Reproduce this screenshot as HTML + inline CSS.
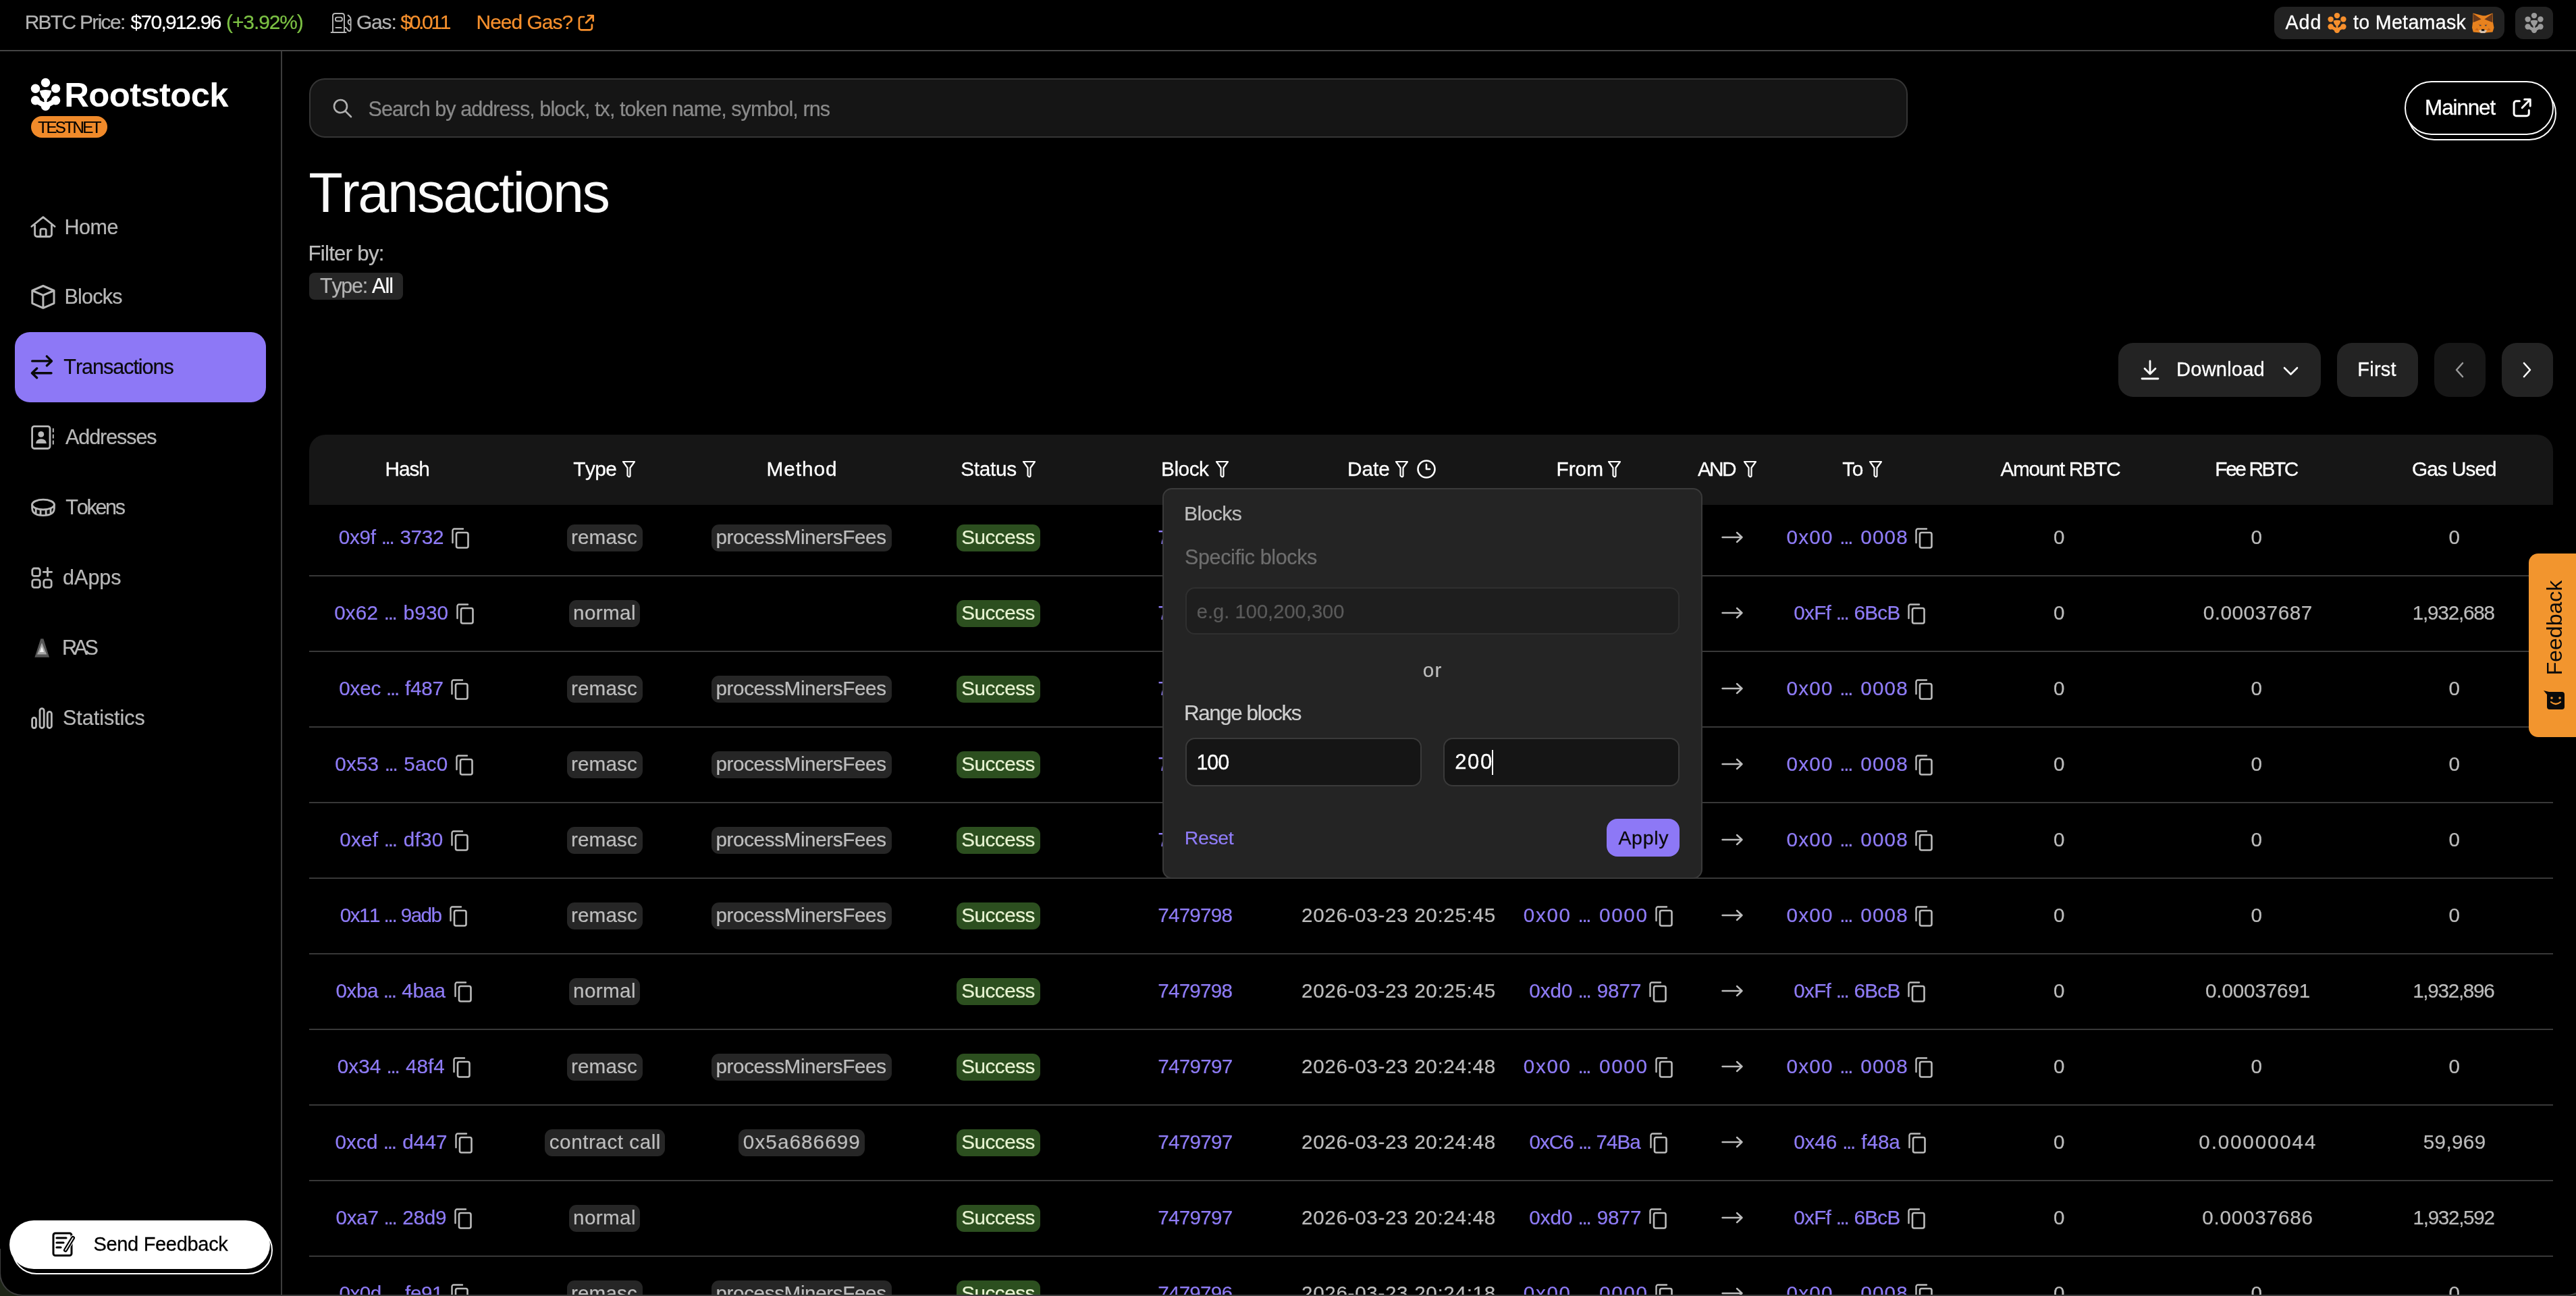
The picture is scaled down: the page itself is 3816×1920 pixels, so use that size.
<!DOCTYPE html>
<html><head><meta charset="utf-8"><title>Transactions</title>
<style>
html,body{margin:0;padding:0;background:#000;width:3816px;height:1920px;overflow:hidden}
body{position:relative;font-family:"Liberation Sans", sans-serif;font-kerning:none;-webkit-font-smoothing:antialiased}
svg{overflow:visible}
</style></head><body>
<div style="position:absolute;left:0;top:0;width:3816px;height:1920px;will-change:transform">
<div style="position:absolute;left:0px;top:74px;width:3816px;height:2px;background:#444;border-radius:0px;"></div>
<div style="position:absolute;left:36.64px;top:18.22px;font-size:29.94px;line-height:1;font-weight:400;color:#b3b3b3;letter-spacing:-1.676px;white-space:nowrap;-webkit-text-stroke:0.22px #b3b3b3;">RBTC Price:</div>
<div style="position:absolute;left:193.48px;top:18.22px;font-size:29.94px;line-height:1;font-weight:400;color:#fff;letter-spacing:-1.668px;white-space:nowrap;-webkit-text-stroke:0.22px #fff;">$70,912.96</div>
<div style="position:absolute;left:335.04px;top:18.22px;font-size:29.94px;line-height:1;font-weight:400;color:#7cc144;letter-spacing:-1.072px;white-space:nowrap;-webkit-text-stroke:0.22px #7cc144;">(+3.92%)</div>
<svg style="position:absolute;left:484px;top:14px" width="44" height="40" viewBox="484 14 44 40" fill="none"><path d="M493 48 V23.6 Q493 20 496.6 20 H506.4 Q510 20 510 23.6 V48 M490.6 48 H512.6 M497.5 41 H505.6 M510 40.6 Q513.2 40.6 514.2 43 Q515.6 46 517.6 46 Q519.6 46 519.6 43 V28.6 Q519.6 25.2 515.6 22.6 M519.6 29.2 Q515.6 29.2 515.6 32.6 Q515.6 35.8 519.6 37.2" stroke="#b8b8b8" stroke-width="1.9" stroke-linecap="round" stroke-linejoin="round"/><rect x="496.9" y="25.6" width="10.1" height="5.7" rx="2.6" stroke="#b8b8b8" stroke-width="1.9"/></svg>
<div style="position:absolute;left:527.99px;top:18.22px;font-size:29.94px;line-height:1;font-weight:400;color:#b3b3b3;letter-spacing:-1.163px;white-space:nowrap;-webkit-text-stroke:0.22px #b3b3b3;">Gas:</div>
<div style="position:absolute;left:593.28px;top:18.22px;font-size:29.94px;line-height:1;font-weight:400;color:#f7902d;letter-spacing:-3.278px;white-space:nowrap;-webkit-text-stroke:0.22px #f7902d;">$0.011</div>
<div style="position:absolute;left:705.54px;top:18.22px;font-size:29.94px;line-height:1;font-weight:400;color:#f7902d;letter-spacing:-0.986px;white-space:nowrap;-webkit-text-stroke:0.22px #f7902d;">Need Gas?</div>
<svg style="position:absolute;left:850px;top:15px" width="40" height="40" viewBox="850 15 40 40" fill="none"><path d="M865.1 25 H861 a3.1 3.1 0 0 0-3.1 3.1 V41.2 a3.1 3.1 0 0 0 3.1 3.1 H873.8 a3.1 3.1 0 0 0 3.1-3.1 V36.6 M871 23 H878.7 V31 M878.5 23.2 L868.1 33.8" stroke="#f7902d" stroke-width="2.7" stroke-linecap="round" stroke-linejoin="round"/></svg>
<div style="position:absolute;left:3369px;top:10px;width:341px;height:48px;background:#222;border-radius:14px;"></div>
<div style="position:absolute;left:3385.54px;top:19.01px;font-size:28.63px;line-height:1;font-weight:400;color:#fff;letter-spacing:0.930px;white-space:nowrap;-webkit-text-stroke:0.29px #fff;">Add</div>
<svg style="position:absolute;left:3448px;top:19px;" width="28" height="30" viewBox="6 6 43 48" fill="none"><g fill="#f7902d"><circle cx="27.5" cy="12.5" r="6.7"/><circle cx="12.5" cy="21.3" r="6.7"/><circle cx="42.6" cy="21.1" r="6.7"/><circle cx="12.5" cy="38.7" r="6.7"/><circle cx="42.6" cy="38.7" r="6.7"/><circle cx="27.5" cy="47.2" r="6.7"/><path d="M18.6 24.6 Q27.5 21.6 36.4 24.6 L34.8 30 Q33.2 34.6 30.2 36.6 L29.2 41 H25.8 L24.8 36.6 Q21.8 34.6 20.2 30 Z"/><path d="M12.5 38.7 L27.5 47.2 L42.6 38.7" stroke="#f7902d" stroke-width="7.6" stroke-linejoin="round" fill="none"/></g></svg>
<div style="position:absolute;left:3485.97px;top:19.01px;font-size:28.63px;line-height:1;font-weight:400;color:#fff;letter-spacing:0.311px;white-space:nowrap;-webkit-text-stroke:0.29px #fff;">to Metamask</div>
<svg style="position:absolute;left:3655px;top:14px" width="45" height="40" viewBox="3655 14 45 40"><path d="M3663.5 19.5 L3678 23.3 H3682 L3692.5 19.5 L3693 33 L3694.5 41 L3692.5 47.5 L3684 48.3 L3678 49 L3672 48.3 L3663.8 47.5 L3662 41 L3663 33 Z" fill="#e8821e"/><path d="M3663.8 20.3 L3675.6 28.5 L3663.6 33.2 Z M3692.2 20.3 L3680.4 28.5 L3692.4 33.2 Z" fill="#6a3a1b"/><path d="M3669.5 41.5 L3672 45 L3666 44.5 Z M3686.5 41.5 L3684 45 L3690 44.5 Z M3670.5 35.5 L3676 36.5 L3674 38 Z M3685.5 35.5 L3680 36.5 L3682 38 Z" fill="#c9661c"/><path d="M3671.8 45.2 L3676 44.2 H3680 L3684.3 45.2 L3681 48.9 H3675 Z" fill="#d6c4b2"/><rect x="3676" y="43.2" width="4.3" height="2.6" fill="#111"/><rect x="3673" y="37" width="2.6" height="1.4" fill="#3c4650"/><rect x="3681" y="37" width="2.6" height="1.4" fill="#3c4650"/></svg>
<div style="position:absolute;left:3726px;top:10px;width:56px;height:48px;background:#222;border-radius:12px;"></div>
<svg style="position:absolute;left:3740px;top:19px;" width="28" height="30" viewBox="6 6 43 48" fill="none"><g fill="#9a9a9a"><circle cx="27.5" cy="12.5" r="6.7"/><circle cx="12.5" cy="21.3" r="6.7"/><circle cx="42.6" cy="21.1" r="6.7"/><circle cx="12.5" cy="38.7" r="6.7"/><circle cx="42.6" cy="38.7" r="6.7"/><circle cx="27.5" cy="47.2" r="6.7"/><path d="M18.6 24.6 Q27.5 21.6 36.4 24.6 L34.8 30 Q33.2 34.6 30.2 36.6 L29.2 41 H25.8 L24.8 36.6 Q21.8 34.6 20.2 30 Z"/><path d="M12.5 38.7 L27.5 47.2 L42.6 38.7" stroke="#9a9a9a" stroke-width="7.6" stroke-linejoin="round" fill="none"/></g></svg>
<div style="position:absolute;left:416px;top:76px;width:2px;height:1844px;background:#3d3d3d;border-radius:0px;"></div>
<svg style="position:absolute;left:46px;top:116px;" width="43" height="48" viewBox="6 6 43 48" fill="none"><g fill="#fff"><circle cx="27.5" cy="12.5" r="6.7"/><circle cx="12.5" cy="21.3" r="6.7"/><circle cx="42.6" cy="21.1" r="6.7"/><circle cx="12.5" cy="38.7" r="6.7"/><circle cx="42.6" cy="38.7" r="6.7"/><circle cx="27.5" cy="47.2" r="6.7"/><path d="M18.6 24.6 Q27.5 21.6 36.4 24.6 L34.8 30 Q33.2 34.6 30.2 36.6 L29.2 41 H25.8 L24.8 36.6 Q21.8 34.6 20.2 30 Z"/><path d="M12.5 38.7 L27.5 47.2 L42.6 38.7" stroke="#fff" stroke-width="7.6" stroke-linejoin="round" fill="none"/></g></svg>
<div style="position:absolute;left:95.30px;top:115.90px;font-size:50.87px;line-height:1;font-weight:700;color:#fff;letter-spacing:-0.670px;white-space:nowrap;">Rootstock</div>
<div style="position:absolute;left:46px;top:172px;width:113px;height:32px;background:#f08a2a;border-radius:16px;"></div>
<div style="position:absolute;left:56.26px;top:176.63px;font-size:24.13px;line-height:1;font-weight:400;color:#000;letter-spacing:-2.605px;white-space:nowrap;-webkit-text-stroke:0.18px #000;">TESTNET</div>
<div style="position:absolute;left:22px;top:492px;width:372px;height:104px;background:#8d78f6;border-radius:22px;"></div>
<div style="position:absolute;left:95.50px;top:320.74px;font-size:30.52px;line-height:1;font-weight:400;color:#b8b8b8;letter-spacing:-0.517px;white-space:nowrap;-webkit-text-stroke:0.23px #b8b8b8;">Home</div>
<div style="position:absolute;left:95.50px;top:424.34px;font-size:30.52px;line-height:1;font-weight:400;color:#b8b8b8;letter-spacing:-0.777px;white-space:nowrap;-webkit-text-stroke:0.23px #b8b8b8;">Blocks</div>
<div style="position:absolute;left:94.31px;top:527.74px;font-size:30.52px;line-height:1;font-weight:400;color:#0a0a0a;letter-spacing:-1.021px;white-space:nowrap;-webkit-text-stroke:0.23px #0a0a0a;">Transactions</div>
<div style="position:absolute;left:96.94px;top:631.74px;font-size:30.52px;line-height:1;font-weight:400;color:#b8b8b8;letter-spacing:-1.067px;white-space:nowrap;-webkit-text-stroke:0.23px #b8b8b8;">Addresses</div>
<div style="position:absolute;left:97.31px;top:736.24px;font-size:30.52px;line-height:1;font-weight:400;color:#b8b8b8;letter-spacing:-2.259px;white-space:nowrap;-webkit-text-stroke:0.23px #b8b8b8;">Tokens</div>
<div style="position:absolute;left:93.12px;top:839.74px;font-size:30.52px;line-height:1;font-weight:400;color:#b8b8b8;letter-spacing:-0.013px;white-space:nowrap;-webkit-text-stroke:0.23px #b8b8b8;">dApps</div>
<div style="position:absolute;left:91.90px;top:943.74px;font-size:30.52px;line-height:1;font-weight:400;color:#b8b8b8;letter-spacing:-4.425px;white-space:nowrap;-webkit-text-stroke:0.23px #b8b8b8;">RAS</div>
<div style="position:absolute;left:93.01px;top:1047.74px;font-size:30.52px;line-height:1;font-weight:400;color:#b8b8b8;letter-spacing:-0.036px;white-space:nowrap;-webkit-text-stroke:0.23px #b8b8b8;">Statistics</div>
<svg style="position:absolute;left:40px;top:310px" width="50" height="50" viewBox="40 310 50 50" fill="none"><path d="M46.8 335.5 L63.9 321.6 L81.1 335.5 M51.6 333 V347.3 a3.2 3.2 0 0 0 3.2 3.2 H73.3 a3.2 3.2 0 0 0 3.2-3.2 V333 M59.9 350.5 V341.4 a2.2 2.2 0 0 1 2.2-2.2 H66 a2.2 2.2 0 0 1 2.2 2.2 V350.5" stroke="#b8b8b8" stroke-width="2.8" stroke-linecap="round" stroke-linejoin="round"/></svg>
<svg style="position:absolute;left:40px;top:415px" width="50" height="50" viewBox="40 415 50 50" fill="none"><path d="M63.9 423.5 L80 430.5 V449.3 L63.9 456.3 L47.8 449.3 V430.5 Z M47.8 430.5 L63.9 437.3 L80 430.5 M63.9 437.3 V456.3" stroke="#b8b8b8" stroke-width="3" stroke-linecap="round" stroke-linejoin="round"/></svg>
<svg style="position:absolute;left:40px;top:520px" width="50" height="50" viewBox="40 520 50 50" fill="none"><path d="M47.7 534.9 H76 M69.3 527.9 L76.5 534.9 L69.3 541.7 M76 552.8 H47.5 M54.7 545.8 L47.4 552.8 L54.7 559.7" stroke="#0a0a0a" stroke-width="3.4" stroke-linecap="round" stroke-linejoin="round"/></svg>
<svg style="position:absolute;left:40px;top:622px" width="50" height="50" viewBox="40 622 50 50" fill="none"><rect x="47.6" y="631.6" width="26.4" height="32.9" rx="3.2" stroke="#b8b8b8" stroke-width="2.8" stroke-linecap="round" stroke-linejoin="round"/><circle cx="60.8" cy="643.4" r="4.4" fill="#b8b8b8"/><path d="M53.1 657 Q53.6 650.3 60.9 650.3 Q68.3 650.3 68.9 657 Z" fill="#b8b8b8"/><path d="M78.8 634.5 V640.5 M78.8 643.5 V649.5 M78.8 652.5 V658.5" stroke="#b8b8b8" stroke-width="2" stroke-linecap="butt"/></svg>
<svg style="position:absolute;left:40px;top:727px" width="50" height="50" viewBox="40 727 50 50" fill="none"><ellipse cx="64" cy="747.6" rx="16.4" ry="7.4" stroke="#b8b8b8" stroke-width="2.8" stroke-linecap="round" stroke-linejoin="round"/><path d="M47.6 747.6 V753 Q47.6 763.6 64 763.6 Q80.4 763.6 80.4 753 V747.6 M53.2 754 V760.5 M60.1 755.3 V762.5 M68.1 755.3 V762.5 M75 754 V760.5" stroke="#b8b8b8" stroke-width="2.8" stroke-linecap="round" stroke-linejoin="round"/></svg>
<svg style="position:absolute;left:40px;top:831px" width="50" height="50" viewBox="40 831 50 50" fill="none"><rect x="47.8" y="842" width="11.4" height="11.4" rx="3" stroke="#b8b8b8" stroke-width="2.8" stroke-linecap="round" stroke-linejoin="round"/><rect x="47.8" y="858.9" width="11.4" height="11.4" rx="3" stroke="#b8b8b8" stroke-width="2.8" stroke-linecap="round" stroke-linejoin="round"/><rect x="64.8" y="858.9" width="11.4" height="11.4" rx="3" stroke="#b8b8b8" stroke-width="2.8" stroke-linecap="round" stroke-linejoin="round"/><path d="M70.5 841.5 V853.4 M64.3 847.4 H76.6" stroke="#b8b8b8" stroke-width="2.8" stroke-linecap="round" stroke-linejoin="round"/></svg>
<svg style="position:absolute;left:40px;top:935px" width="50" height="50" viewBox="40 935 50 50" fill="none"><path d="M60.3 946.2 H64.3 L73 973.8 H51.4 Z" fill="#555"/><path d="M62 952.2 L69.1 969.5 H55 Z" fill="#a8a8a8"/><path d="M62 958.1 L65.1 965.9 H58.9 Z" fill="#f0f0f0"/></svg>
<svg style="position:absolute;left:40px;top:1038px" width="50" height="50" viewBox="40 1038 50 50" fill="none"><rect x="47.6" y="1063.1" width="5.9" height="15.4" rx="2.95" stroke="#b8b8b8" stroke-width="2.8" stroke-linecap="round" stroke-linejoin="round"/><rect x="59" y="1049.6" width="6.2" height="28.9" rx="3.1" stroke="#b8b8b8" stroke-width="2.8" stroke-linecap="round" stroke-linejoin="round"/><rect x="70.3" y="1054.3" width="6.1" height="24.2" rx="3.05" stroke="#b8b8b8" stroke-width="2.8" stroke-linecap="round" stroke-linejoin="round"/></svg>
<div style="position:absolute;left:18px;top:1816px;width:386px;height:72px;background:#000;border-radius:36px;border:2px solid #fff;box-sizing:border-box;"></div>
<div style="position:absolute;left:14px;top:1808px;width:386px;height:72px;background:#fff;border-radius:36px;"></div>
<svg style="position:absolute;left:77px;top:1825px;" width="34" height="37" viewBox="0 0 34 37" fill="none"><rect x="2" y="2" width="27" height="33" rx="3" stroke="#000" stroke-width="3"/><path d="M7 9 H21 M7 16 H17 M7 23 H13" stroke="#000" stroke-width="3.2" stroke-linecap="round"/><path d="M31 9 L20 27" stroke="#fff" stroke-width="8" stroke-linecap="round"/><path d="M31 9 L20 27" stroke="#000" stroke-width="6" stroke-linecap="round"/><path d="M31 9 L20 27" stroke="#fff" stroke-width="1.6" stroke-linecap="round"/></svg>
<div style="position:absolute;left:138.38px;top:1828.94px;font-size:29.07px;line-height:1;font-weight:400;color:#000;letter-spacing:-0.338px;white-space:nowrap;-webkit-text-stroke:0.29px #000;">Send Feedback</div>
<div style="position:absolute;left:458px;top:116px;width:2368px;height:88px;background:#151515;border-radius:23px;border:2px solid #353535;box-sizing:border-box;"></div>
<svg style="position:absolute;left:492px;top:145px;" width="30" height="30" viewBox="0 0 30 30" fill="none"><circle cx="12.5" cy="12.5" r="9.5" stroke="#b0b0b0" stroke-width="2.6"/><path d="M19.5 19.5 L28 28" stroke="#b0b0b0" stroke-width="2.6" stroke-linecap="round"/></svg>
<div style="position:absolute;left:545.61px;top:145.74px;font-size:30.52px;line-height:1;font-weight:400;color:#8a8a8a;letter-spacing:-0.929px;white-space:nowrap;-webkit-text-stroke:0.23px #8a8a8a;">Search by address, block, tx, token name, symbol, rns</div>
<div style="position:absolute;left:3566px;top:128px;width:221px;height:80px;background:#000;border-radius:40px;border:2px solid #fff;box-sizing:border-box;"></div>
<div style="position:absolute;left:3562px;top:120px;width:221px;height:80px;background:#000;border-radius:40px;border:2px solid #fff;box-sizing:border-box;"></div>
<div style="position:absolute;left:3592.12px;top:143.61px;font-size:31.4px;line-height:1;font-weight:400;color:#fff;letter-spacing:-1.101px;white-space:nowrap;-webkit-text-stroke:0.32px #fff;">Mainnet</div>
<svg style="position:absolute;left:3710px;top:135px" width="50" height="50" viewBox="3710 135 50 50" fill="none"><path d="M3732.4 149.7 H3727.6 a3.5 3.5 0 0 0-3.5 3.5 V168.3 a3.5 3.5 0 0 0 3.5 3.5 H3742.8 a3.5 3.5 0 0 0 3.5-3.5 V163.2 M3739.7 147.3 H3748.2 V157 M3748 147.5 L3736.2 159.7" stroke="#fff" stroke-width="3" stroke-linecap="round" stroke-linejoin="round"/></svg>
<div style="position:absolute;left:457.14px;top:245.43px;font-size:82.85px;line-height:1;font-weight:400;color:#fafafa;letter-spacing:-2.494px;white-space:nowrap;">Transactions</div>
<div style="position:absolute;left:456.44px;top:360.14px;font-size:31.25px;line-height:1;font-weight:400;color:#bdbdbd;letter-spacing:-0.744px;white-space:nowrap;-webkit-text-stroke:0.23px #bdbdbd;">Filter by:</div>
<div style="position:absolute;left:458px;top:404px;width:139px;height:40px;background:#262626;border-radius:8px;"></div>
<div style="position:absolute;left:474.01px;top:408.24px;font-size:30.52px;line-height:1;font-weight:400;color:#b3b3b3;letter-spacing:-1.264px;white-space:nowrap;-webkit-text-stroke:0.23px #b3b3b3;">Type:</div>
<div style="position:absolute;left:550.94px;top:408.24px;font-size:30.52px;line-height:1;font-weight:400;color:#fff;letter-spacing:-0.908px;white-space:nowrap;-webkit-text-stroke:0.23px #fff;">All</div>
<div style="position:absolute;left:3138px;top:508px;width:300px;height:80px;background:#232323;border-radius:22px;"></div>
<svg style="position:absolute;left:3171px;top:533px;" width="28" height="30" viewBox="0 0 28 30" fill="none"><path d="M14 2 V21 M6 13 L14 21 L22 13 M2 28 H26" stroke="#fff" stroke-width="2.8" stroke-linecap="round" stroke-linejoin="round"/></svg>
<div style="position:absolute;left:3224.12px;top:532.94px;font-size:29.07px;line-height:1;font-weight:400;color:#fff;letter-spacing:0.197px;white-space:nowrap;-webkit-text-stroke:0.29px #fff;">Download</div>
<svg style="position:absolute;left:3382px;top:543px;" width="23" height="14" viewBox="0 0 23 14" fill="none"><path d="M2 2 L11.5 11.5 L21 2" stroke="#fff" stroke-width="2.6" stroke-linecap="round" stroke-linejoin="round"/></svg>
<div style="position:absolute;left:3462px;top:508px;width:120px;height:80px;background:#232323;border-radius:22px;"></div>
<div style="position:absolute;left:3492.32px;top:532.94px;font-size:29.07px;line-height:1;font-weight:400;color:#fff;letter-spacing:0.197px;white-space:nowrap;-webkit-text-stroke:0.29px #fff;">First</div>
<div style="position:absolute;left:3606px;top:508px;width:76px;height:80px;background:#171717;border-radius:22px;"></div>
<svg style="position:absolute;left:3636px;top:536px;" width="15" height="24" viewBox="0 0 15 24" fill="none"><path d="M12 2 L3 12 L12 22" stroke="#9a9a9a" stroke-width="2.6" stroke-linecap="round" stroke-linejoin="round"/></svg>
<div style="position:absolute;left:3706px;top:508px;width:76px;height:80px;background:#232323;border-radius:22px;"></div>
<svg style="position:absolute;left:3736px;top:536px;" width="15" height="24" viewBox="0 0 15 24" fill="none"><path d="M3 2 L12 12 L3 22" stroke="#fff" stroke-width="2.6" stroke-linecap="round" stroke-linejoin="round"/></svg>
<div style="position:absolute;left:458px;top:644px;width:3324px;height:104px;background:#161616;border-radius:24px 24px 0 0;"></div>
<div style="position:absolute;left:570.56px;top:679.84px;font-size:29.8px;line-height:1;font-weight:400;color:#fff;letter-spacing:-1.063px;white-space:nowrap;-webkit-text-stroke:0.30px #fff;">Hash</div>
<div style="position:absolute;left:849.33px;top:679.84px;font-size:29.8px;line-height:1;font-weight:400;color:#fff;letter-spacing:-0.552px;white-space:nowrap;-webkit-text-stroke:0.30px #fff;">Type</div>
<svg style="position:absolute;left:920.5px;top:682px;" width="21.0" height="26" viewBox="0 0 21 26" fill="none"><path d="M2 2 H19 L12.5 11 V23 a1.6 1.6 0 0 1-2.6 1 L8.5 22.5 V11 Z" stroke="#fff" stroke-width="2.2" stroke-linejoin="round"/></svg>
<div style="position:absolute;left:1135.56px;top:679.84px;font-size:29.8px;line-height:1;font-weight:400;color:#fff;letter-spacing:0.914px;white-space:nowrap;-webkit-text-stroke:0.30px #fff;">Method</div>
<div style="position:absolute;left:1423.15px;top:679.84px;font-size:29.8px;line-height:1;font-weight:400;color:#fff;letter-spacing:-0.310px;white-space:nowrap;-webkit-text-stroke:0.30px #fff;">Status</div>
<svg style="position:absolute;left:1513.5px;top:682px;" width="21.0" height="26" viewBox="0 0 21 26" fill="none"><path d="M2 2 H19 L12.5 11 V23 a1.6 1.6 0 0 1-2.6 1 L8.5 22.5 V11 Z" stroke="#fff" stroke-width="2.2" stroke-linejoin="round"/></svg>
<div style="position:absolute;left:1720.06px;top:679.84px;font-size:29.8px;line-height:1;font-weight:400;color:#fff;letter-spacing:-0.492px;white-space:nowrap;-webkit-text-stroke:0.30px #fff;">Block</div>
<svg style="position:absolute;left:1799.5px;top:682px;" width="21.0" height="26" viewBox="0 0 21 26" fill="none"><path d="M2 2 H19 L12.5 11 V23 a1.6 1.6 0 0 1-2.6 1 L8.5 22.5 V11 Z" stroke="#fff" stroke-width="2.2" stroke-linejoin="round"/></svg>
<div style="position:absolute;left:1996.06px;top:679.84px;font-size:29.8px;line-height:1;font-weight:400;color:#fff;letter-spacing:-0.059px;white-space:nowrap;-webkit-text-stroke:0.30px #fff;">Date</div>
<svg style="position:absolute;left:2066px;top:682px;" width="21" height="26" viewBox="0 0 21 26" fill="none"><path d="M2 2 H19 L12.5 11 V23 a1.6 1.6 0 0 1-2.6 1 L8.5 22.5 V11 Z" stroke="#fff" stroke-width="2.2" stroke-linejoin="round"/></svg>
<svg style="position:absolute;left:2098px;top:680px;" width="30" height="30" viewBox="0 0 30 30" fill="none"><circle cx="15" cy="15" r="12.5" stroke="#fff" stroke-width="2.6"/><path d="M15 8 V15 H20" stroke="#fff" stroke-width="2.6" stroke-linecap="round" stroke-linejoin="round"/></svg>
<div style="position:absolute;left:2305.56px;top:679.84px;font-size:29.8px;line-height:1;font-weight:400;color:#fff;letter-spacing:-0.038px;white-space:nowrap;-webkit-text-stroke:0.30px #fff;">From</div>
<svg style="position:absolute;left:2381px;top:682px;" width="21" height="26" viewBox="0 0 21 26" fill="none"><path d="M2 2 H19 L12.5 11 V23 a1.6 1.6 0 0 1-2.6 1 L8.5 22.5 V11 Z" stroke="#fff" stroke-width="2.2" stroke-linejoin="round"/></svg>
<div style="position:absolute;left:2514.94px;top:679.84px;font-size:29.8px;line-height:1;font-weight:400;color:#fff;letter-spacing:-2.717px;white-space:nowrap;-webkit-text-stroke:0.30px #fff;">AND</div>
<svg style="position:absolute;left:2582px;top:682px;" width="21" height="26" viewBox="0 0 21 26" fill="none"><path d="M2 2 H19 L12.5 11 V23 a1.6 1.6 0 0 1-2.6 1 L8.5 22.5 V11 Z" stroke="#fff" stroke-width="2.2" stroke-linejoin="round"/></svg>
<div style="position:absolute;left:2729.33px;top:679.84px;font-size:29.8px;line-height:1;font-weight:400;color:#fff;letter-spacing:-3.856px;white-space:nowrap;-webkit-text-stroke:0.30px #fff;">To</div>
<svg style="position:absolute;left:2767.5px;top:682px;" width="21.0" height="26" viewBox="0 0 21 26" fill="none"><path d="M2 2 H19 L12.5 11 V23 a1.6 1.6 0 0 1-2.6 1 L8.5 22.5 V11 Z" stroke="#fff" stroke-width="2.2" stroke-linejoin="round"/></svg>
<div style="position:absolute;left:2963.54px;top:679.84px;font-size:29.8px;line-height:1;font-weight:400;color:#fff;letter-spacing:-1.391px;white-space:nowrap;-webkit-text-stroke:0.30px #fff;">Amount RBTC</div>
<div style="position:absolute;left:3281.36px;top:679.84px;font-size:29.8px;line-height:1;font-weight:400;color:#fff;letter-spacing:-2.396px;white-space:nowrap;-webkit-text-stroke:0.30px #fff;">Fee RBTC</div>
<div style="position:absolute;left:3573.00px;top:679.84px;font-size:29.8px;line-height:1;font-weight:400;color:#fff;letter-spacing:-0.983px;white-space:nowrap;-webkit-text-stroke:0.30px #fff;">Gas Used</div>
<div style="position:absolute;left:458px;top:852px;width:3324px;height:2px;background:#383838;border-radius:0px;"></div>
<div style="position:absolute;left:501.84px;top:780.76px;font-size:29.65px;line-height:1;font-weight:400;color:#8f7cf7;letter-spacing:-0.293px;white-space:nowrap;-webkit-text-stroke:0.22px #8f7cf7;">0x9f <span style="letter-spacing:-2.30px">..</span>. 3732</div>
<svg style="position:absolute;left:668.5px;top:781.5px;" width="26.0" height="31.0" viewBox="0 0 26 31" fill="none"><path d="M1.5 22 V4 a2.5 2.5 0 0 1 2.5-2.5 H17" stroke="#bcbcbc" stroke-width="2.4" stroke-linecap="round"/><rect x="7" y="7" width="17.5" height="22.5" rx="2.5" stroke="#bcbcbc" stroke-width="2.6"/></svg>
<div style="position:absolute;left:840px;top:776.5px;width:111.70000000000005px;height:40.0px;background:#262626;border-radius:11px;"></div>
<div style="position:absolute;left:846.03px;top:780.76px;font-size:29.65px;line-height:1;font-weight:400;color:#bdbdbd;letter-spacing:0.110px;white-space:nowrap;-webkit-text-stroke:0.22px #bdbdbd;">remasc</div>
<div style="position:absolute;left:1054px;top:776.5px;width:266.70000000000005px;height:40.0px;background:#262626;border-radius:11px;"></div>
<div style="position:absolute;left:1060.49px;top:780.76px;font-size:29.65px;line-height:1;font-weight:400;color:#bdbdbd;letter-spacing:-0.382px;white-space:nowrap;-webkit-text-stroke:0.22px #bdbdbd;">processMinersFees</div>
<div style="position:absolute;left:1417px;top:776.5px;width:124px;height:40.0px;background:#2c4f1f;border-radius:11px;"></div>
<div style="position:absolute;left:1424.15px;top:780.76px;font-size:29.65px;line-height:1;font-weight:400;color:#e8f4d2;letter-spacing:-0.473px;white-space:nowrap;-webkit-text-stroke:0.22px #e8f4d2;">Success</div>
<div style="position:absolute;left:1715.28px;top:780.76px;font-size:29.65px;line-height:1;font-weight:400;color:#8f7cf7;letter-spacing:-0.767px;white-space:nowrap;-webkit-text-stroke:0.22px #8f7cf7;">7479799</div>
<div style="position:absolute;left:1928.01px;top:780.76px;font-size:29.65px;line-height:1;font-weight:400;color:#bcbcbc;letter-spacing:0.664px;white-space:nowrap;-webkit-text-stroke:0.22px #bcbcbc;">2026-03-23 20:26:18</div>
<div style="position:absolute;left:2256.84px;top:780.76px;font-size:29.65px;line-height:1;font-weight:400;color:#8f7cf7;letter-spacing:1.628px;white-space:nowrap;-webkit-text-stroke:0.22px #8f7cf7;">0x00 <span style="letter-spacing:-2.30px">..</span>. 0000</div>
<svg style="position:absolute;left:2451.5px;top:781.5px;" width="26.0" height="31.0" viewBox="0 0 26 31" fill="none"><path d="M1.5 22 V4 a2.5 2.5 0 0 1 2.5-2.5 H17" stroke="#bcbcbc" stroke-width="2.4" stroke-linecap="round"/><rect x="7" y="7" width="17.5" height="22.5" rx="2.5" stroke="#bcbcbc" stroke-width="2.6"/></svg>
<svg style="position:absolute;left:2550px;top:787px;" width="33" height="18" viewBox="0 0 33 18" fill="none"><path d="M1.5 9 H30.5 M23 2 L30.5 9 L23 16" stroke="#bcbcbc" stroke-width="2.4" stroke-linecap="round" stroke-linejoin="round"/></svg>
<div style="position:absolute;left:2646.44px;top:780.76px;font-size:29.65px;line-height:1;font-weight:400;color:#8f7cf7;letter-spacing:1.261px;white-space:nowrap;-webkit-text-stroke:0.22px #8f7cf7;">0x00 <span style="letter-spacing:-2.30px">..</span>. 0008</div>
<svg style="position:absolute;left:2837.1px;top:781.5px;" width="26.0" height="31.0" viewBox="0 0 26 31" fill="none"><path d="M1.5 22 V4 a2.5 2.5 0 0 1 2.5-2.5 H17" stroke="#bcbcbc" stroke-width="2.4" stroke-linecap="round"/><rect x="7" y="7" width="17.5" height="22.5" rx="2.5" stroke="#bcbcbc" stroke-width="2.6"/></svg>
<div style="position:absolute;left:3042.04px;top:780.76px;font-size:29.65px;line-height:1;font-weight:400;color:#bcbcbc;letter-spacing:0.000px;white-space:nowrap;-webkit-text-stroke:0.22px #bcbcbc;">0</div>
<div style="position:absolute;left:3334.44px;top:780.76px;font-size:29.65px;line-height:1;font-weight:400;color:#bcbcbc;letter-spacing:0.000px;white-space:nowrap;-webkit-text-stroke:0.22px #bcbcbc;">0</div>
<div style="position:absolute;left:3627.44px;top:780.76px;font-size:29.65px;line-height:1;font-weight:400;color:#bcbcbc;letter-spacing:0.000px;white-space:nowrap;-webkit-text-stroke:0.22px #bcbcbc;">0</div>
<div style="position:absolute;left:458px;top:964px;width:3324px;height:2px;background:#383838;border-radius:0px;"></div>
<div style="position:absolute;left:495.14px;top:892.76px;font-size:29.65px;line-height:1;font-weight:400;color:#8f7cf7;letter-spacing:0.218px;white-space:nowrap;-webkit-text-stroke:0.22px #8f7cf7;">0x62 <span style="letter-spacing:-2.30px">..</span>. b930</div>
<svg style="position:absolute;left:675.5px;top:893.5px;" width="26.0" height="31.0" viewBox="0 0 26 31" fill="none"><path d="M1.5 22 V4 a2.5 2.5 0 0 1 2.5-2.5 H17" stroke="#bcbcbc" stroke-width="2.4" stroke-linecap="round"/><rect x="7" y="7" width="17.5" height="22.5" rx="2.5" stroke="#bcbcbc" stroke-width="2.6"/></svg>
<div style="position:absolute;left:843px;top:888.5px;width:104.79999999999995px;height:40.0px;background:#262626;border-radius:11px;"></div>
<div style="position:absolute;left:849.03px;top:892.76px;font-size:29.65px;line-height:1;font-weight:400;color:#bdbdbd;letter-spacing:0.385px;white-space:nowrap;-webkit-text-stroke:0.22px #bdbdbd;">normal</div>
<div style="position:absolute;left:1417px;top:888.5px;width:124px;height:40.0px;background:#2c4f1f;border-radius:11px;"></div>
<div style="position:absolute;left:1424.15px;top:892.76px;font-size:29.65px;line-height:1;font-weight:400;color:#e8f4d2;letter-spacing:-0.473px;white-space:nowrap;-webkit-text-stroke:0.22px #e8f4d2;">Success</div>
<div style="position:absolute;left:1715.28px;top:892.76px;font-size:29.65px;line-height:1;font-weight:400;color:#8f7cf7;letter-spacing:-0.767px;white-space:nowrap;-webkit-text-stroke:0.22px #8f7cf7;">7479799</div>
<div style="position:absolute;left:1928.01px;top:892.76px;font-size:29.65px;line-height:1;font-weight:400;color:#bcbcbc;letter-spacing:0.664px;white-space:nowrap;-webkit-text-stroke:0.22px #bcbcbc;">2026-03-23 20:26:18</div>
<div style="position:absolute;left:2265.34px;top:892.76px;font-size:29.65px;line-height:1;font-weight:400;color:#8f7cf7;letter-spacing:-0.069px;white-space:nowrap;-webkit-text-stroke:0.22px #8f7cf7;">0xd0 <span style="letter-spacing:-2.30px">..</span>. 9877</div>
<svg style="position:absolute;left:2442.7px;top:893.5px;" width="26.0" height="31.0" viewBox="0 0 26 31" fill="none"><path d="M1.5 22 V4 a2.5 2.5 0 0 1 2.5-2.5 H17" stroke="#bcbcbc" stroke-width="2.4" stroke-linecap="round"/><rect x="7" y="7" width="17.5" height="22.5" rx="2.5" stroke="#bcbcbc" stroke-width="2.6"/></svg>
<svg style="position:absolute;left:2550px;top:899px;" width="33" height="18" viewBox="0 0 33 18" fill="none"><path d="M1.5 9 H30.5 M23 2 L30.5 9 L23 16" stroke="#bcbcbc" stroke-width="2.4" stroke-linecap="round" stroke-linejoin="round"/></svg>
<div style="position:absolute;left:2657.34px;top:892.76px;font-size:29.65px;line-height:1;font-weight:400;color:#8f7cf7;letter-spacing:-0.719px;white-space:nowrap;-webkit-text-stroke:0.22px #8f7cf7;">0xFf <span style="letter-spacing:-2.30px">..</span>. 6BcB</div>
<svg style="position:absolute;left:2826.2px;top:893.5px;" width="26.0" height="31.0" viewBox="0 0 26 31" fill="none"><path d="M1.5 22 V4 a2.5 2.5 0 0 1 2.5-2.5 H17" stroke="#bcbcbc" stroke-width="2.4" stroke-linecap="round"/><rect x="7" y="7" width="17.5" height="22.5" rx="2.5" stroke="#bcbcbc" stroke-width="2.6"/></svg>
<div style="position:absolute;left:3042.04px;top:892.76px;font-size:29.65px;line-height:1;font-weight:400;color:#bcbcbc;letter-spacing:0.000px;white-space:nowrap;-webkit-text-stroke:0.22px #bcbcbc;">0</div>
<div style="position:absolute;left:3263.84px;top:892.76px;font-size:29.65px;line-height:1;font-weight:400;color:#bcbcbc;letter-spacing:0.522px;white-space:nowrap;-webkit-text-stroke:0.22px #bcbcbc;">0.00037687</div>
<div style="position:absolute;left:3573.74px;top:892.76px;font-size:29.65px;line-height:1;font-weight:400;color:#bcbcbc;letter-spacing:-1.195px;white-space:nowrap;-webkit-text-stroke:0.22px #bcbcbc;">1,932,688</div>
<div style="position:absolute;left:458px;top:1076px;width:3324px;height:2px;background:#383838;border-radius:0px;"></div>
<div style="position:absolute;left:502.34px;top:1004.76px;font-size:29.65px;line-height:1;font-weight:400;color:#8f7cf7;letter-spacing:-0.217px;white-space:nowrap;-webkit-text-stroke:0.22px #8f7cf7;">0xec <span style="letter-spacing:-2.30px">..</span>. f487</div>
<svg style="position:absolute;left:668.1px;top:1005.5px;" width="26.0" height="31.0" viewBox="0 0 26 31" fill="none"><path d="M1.5 22 V4 a2.5 2.5 0 0 1 2.5-2.5 H17" stroke="#bcbcbc" stroke-width="2.4" stroke-linecap="round"/><rect x="7" y="7" width="17.5" height="22.5" rx="2.5" stroke="#bcbcbc" stroke-width="2.6"/></svg>
<div style="position:absolute;left:840px;top:1000.5px;width:111.70000000000005px;height:40.0px;background:#262626;border-radius:11px;"></div>
<div style="position:absolute;left:846.03px;top:1004.76px;font-size:29.65px;line-height:1;font-weight:400;color:#bdbdbd;letter-spacing:0.110px;white-space:nowrap;-webkit-text-stroke:0.22px #bdbdbd;">remasc</div>
<div style="position:absolute;left:1054px;top:1000.5px;width:266.70000000000005px;height:40.0px;background:#262626;border-radius:11px;"></div>
<div style="position:absolute;left:1060.49px;top:1004.76px;font-size:29.65px;line-height:1;font-weight:400;color:#bdbdbd;letter-spacing:-0.382px;white-space:nowrap;-webkit-text-stroke:0.22px #bdbdbd;">processMinersFees</div>
<div style="position:absolute;left:1417px;top:1000.5px;width:124px;height:40.0px;background:#2c4f1f;border-radius:11px;"></div>
<div style="position:absolute;left:1424.15px;top:1004.76px;font-size:29.65px;line-height:1;font-weight:400;color:#e8f4d2;letter-spacing:-0.473px;white-space:nowrap;-webkit-text-stroke:0.22px #e8f4d2;">Success</div>
<div style="position:absolute;left:1715.28px;top:1004.76px;font-size:29.65px;line-height:1;font-weight:400;color:#8f7cf7;letter-spacing:-0.767px;white-space:nowrap;-webkit-text-stroke:0.22px #8f7cf7;">7479799</div>
<div style="position:absolute;left:1928.01px;top:1004.76px;font-size:29.65px;line-height:1;font-weight:400;color:#bcbcbc;letter-spacing:0.664px;white-space:nowrap;-webkit-text-stroke:0.22px #bcbcbc;">2026-03-23 20:26:18</div>
<div style="position:absolute;left:2256.84px;top:1004.76px;font-size:29.65px;line-height:1;font-weight:400;color:#8f7cf7;letter-spacing:1.628px;white-space:nowrap;-webkit-text-stroke:0.22px #8f7cf7;">0x00 <span style="letter-spacing:-2.30px">..</span>. 0000</div>
<svg style="position:absolute;left:2451.5px;top:1005.5px;" width="26.0" height="31.0" viewBox="0 0 26 31" fill="none"><path d="M1.5 22 V4 a2.5 2.5 0 0 1 2.5-2.5 H17" stroke="#bcbcbc" stroke-width="2.4" stroke-linecap="round"/><rect x="7" y="7" width="17.5" height="22.5" rx="2.5" stroke="#bcbcbc" stroke-width="2.6"/></svg>
<svg style="position:absolute;left:2550px;top:1011px;" width="33" height="18" viewBox="0 0 33 18" fill="none"><path d="M1.5 9 H30.5 M23 2 L30.5 9 L23 16" stroke="#bcbcbc" stroke-width="2.4" stroke-linecap="round" stroke-linejoin="round"/></svg>
<div style="position:absolute;left:2646.44px;top:1004.76px;font-size:29.65px;line-height:1;font-weight:400;color:#8f7cf7;letter-spacing:1.261px;white-space:nowrap;-webkit-text-stroke:0.22px #8f7cf7;">0x00 <span style="letter-spacing:-2.30px">..</span>. 0008</div>
<svg style="position:absolute;left:2837.1px;top:1005.5px;" width="26.0" height="31.0" viewBox="0 0 26 31" fill="none"><path d="M1.5 22 V4 a2.5 2.5 0 0 1 2.5-2.5 H17" stroke="#bcbcbc" stroke-width="2.4" stroke-linecap="round"/><rect x="7" y="7" width="17.5" height="22.5" rx="2.5" stroke="#bcbcbc" stroke-width="2.6"/></svg>
<div style="position:absolute;left:3042.04px;top:1004.76px;font-size:29.65px;line-height:1;font-weight:400;color:#bcbcbc;letter-spacing:0.000px;white-space:nowrap;-webkit-text-stroke:0.22px #bcbcbc;">0</div>
<div style="position:absolute;left:3334.44px;top:1004.76px;font-size:29.65px;line-height:1;font-weight:400;color:#bcbcbc;letter-spacing:0.000px;white-space:nowrap;-webkit-text-stroke:0.22px #bcbcbc;">0</div>
<div style="position:absolute;left:3627.44px;top:1004.76px;font-size:29.65px;line-height:1;font-weight:400;color:#bcbcbc;letter-spacing:0.000px;white-space:nowrap;-webkit-text-stroke:0.22px #bcbcbc;">0</div>
<div style="position:absolute;left:458px;top:1188px;width:3324px;height:2px;background:#383838;border-radius:0px;"></div>
<div style="position:absolute;left:496.34px;top:1116.76px;font-size:29.65px;line-height:1;font-weight:400;color:#8f7cf7;letter-spacing:0.165px;white-space:nowrap;-webkit-text-stroke:0.22px #8f7cf7;">0x53 <span style="letter-spacing:-2.30px">..</span>. 5ac0</div>
<svg style="position:absolute;left:674.5px;top:1117.5px;" width="26.0" height="31.0" viewBox="0 0 26 31" fill="none"><path d="M1.5 22 V4 a2.5 2.5 0 0 1 2.5-2.5 H17" stroke="#bcbcbc" stroke-width="2.4" stroke-linecap="round"/><rect x="7" y="7" width="17.5" height="22.5" rx="2.5" stroke="#bcbcbc" stroke-width="2.6"/></svg>
<div style="position:absolute;left:840px;top:1112.5px;width:111.70000000000005px;height:40.0px;background:#262626;border-radius:11px;"></div>
<div style="position:absolute;left:846.03px;top:1116.76px;font-size:29.65px;line-height:1;font-weight:400;color:#bdbdbd;letter-spacing:0.110px;white-space:nowrap;-webkit-text-stroke:0.22px #bdbdbd;">remasc</div>
<div style="position:absolute;left:1054px;top:1112.5px;width:266.70000000000005px;height:40.0px;background:#262626;border-radius:11px;"></div>
<div style="position:absolute;left:1060.49px;top:1116.76px;font-size:29.65px;line-height:1;font-weight:400;color:#bdbdbd;letter-spacing:-0.382px;white-space:nowrap;-webkit-text-stroke:0.22px #bdbdbd;">processMinersFees</div>
<div style="position:absolute;left:1417px;top:1112.5px;width:124px;height:40.0px;background:#2c4f1f;border-radius:11px;"></div>
<div style="position:absolute;left:1424.15px;top:1116.76px;font-size:29.65px;line-height:1;font-weight:400;color:#e8f4d2;letter-spacing:-0.473px;white-space:nowrap;-webkit-text-stroke:0.22px #e8f4d2;">Success</div>
<div style="position:absolute;left:1715.28px;top:1116.76px;font-size:29.65px;line-height:1;font-weight:400;color:#8f7cf7;letter-spacing:-0.767px;white-space:nowrap;-webkit-text-stroke:0.22px #8f7cf7;">7479799</div>
<div style="position:absolute;left:1928.01px;top:1116.76px;font-size:29.65px;line-height:1;font-weight:400;color:#bcbcbc;letter-spacing:0.664px;white-space:nowrap;-webkit-text-stroke:0.22px #bcbcbc;">2026-03-23 20:26:18</div>
<div style="position:absolute;left:2256.84px;top:1116.76px;font-size:29.65px;line-height:1;font-weight:400;color:#8f7cf7;letter-spacing:1.628px;white-space:nowrap;-webkit-text-stroke:0.22px #8f7cf7;">0x00 <span style="letter-spacing:-2.30px">..</span>. 0000</div>
<svg style="position:absolute;left:2451.5px;top:1117.5px;" width="26.0" height="31.0" viewBox="0 0 26 31" fill="none"><path d="M1.5 22 V4 a2.5 2.5 0 0 1 2.5-2.5 H17" stroke="#bcbcbc" stroke-width="2.4" stroke-linecap="round"/><rect x="7" y="7" width="17.5" height="22.5" rx="2.5" stroke="#bcbcbc" stroke-width="2.6"/></svg>
<svg style="position:absolute;left:2550px;top:1123px;" width="33" height="18" viewBox="0 0 33 18" fill="none"><path d="M1.5 9 H30.5 M23 2 L30.5 9 L23 16" stroke="#bcbcbc" stroke-width="2.4" stroke-linecap="round" stroke-linejoin="round"/></svg>
<div style="position:absolute;left:2646.44px;top:1116.76px;font-size:29.65px;line-height:1;font-weight:400;color:#8f7cf7;letter-spacing:1.261px;white-space:nowrap;-webkit-text-stroke:0.22px #8f7cf7;">0x00 <span style="letter-spacing:-2.30px">..</span>. 0008</div>
<svg style="position:absolute;left:2837.1px;top:1117.5px;" width="26.0" height="31.0" viewBox="0 0 26 31" fill="none"><path d="M1.5 22 V4 a2.5 2.5 0 0 1 2.5-2.5 H17" stroke="#bcbcbc" stroke-width="2.4" stroke-linecap="round"/><rect x="7" y="7" width="17.5" height="22.5" rx="2.5" stroke="#bcbcbc" stroke-width="2.6"/></svg>
<div style="position:absolute;left:3042.04px;top:1116.76px;font-size:29.65px;line-height:1;font-weight:400;color:#bcbcbc;letter-spacing:0.000px;white-space:nowrap;-webkit-text-stroke:0.22px #bcbcbc;">0</div>
<div style="position:absolute;left:3334.44px;top:1116.76px;font-size:29.65px;line-height:1;font-weight:400;color:#bcbcbc;letter-spacing:0.000px;white-space:nowrap;-webkit-text-stroke:0.22px #bcbcbc;">0</div>
<div style="position:absolute;left:3627.44px;top:1116.76px;font-size:29.65px;line-height:1;font-weight:400;color:#bcbcbc;letter-spacing:0.000px;white-space:nowrap;-webkit-text-stroke:0.22px #bcbcbc;">0</div>
<div style="position:absolute;left:458px;top:1300px;width:3324px;height:2px;background:#383838;border-radius:0px;"></div>
<div style="position:absolute;left:503.24px;top:1228.76px;font-size:29.65px;line-height:1;font-weight:400;color:#8f7cf7;letter-spacing:0.259px;white-space:nowrap;-webkit-text-stroke:0.22px #8f7cf7;">0xef <span style="letter-spacing:-2.30px">..</span>. df30</div>
<svg style="position:absolute;left:667.5px;top:1229.5px;" width="26.0" height="31.0" viewBox="0 0 26 31" fill="none"><path d="M1.5 22 V4 a2.5 2.5 0 0 1 2.5-2.5 H17" stroke="#bcbcbc" stroke-width="2.4" stroke-linecap="round"/><rect x="7" y="7" width="17.5" height="22.5" rx="2.5" stroke="#bcbcbc" stroke-width="2.6"/></svg>
<div style="position:absolute;left:840px;top:1224.5px;width:111.70000000000005px;height:40.0px;background:#262626;border-radius:11px;"></div>
<div style="position:absolute;left:846.03px;top:1228.76px;font-size:29.65px;line-height:1;font-weight:400;color:#bdbdbd;letter-spacing:0.110px;white-space:nowrap;-webkit-text-stroke:0.22px #bdbdbd;">remasc</div>
<div style="position:absolute;left:1054px;top:1224.5px;width:266.70000000000005px;height:40.0px;background:#262626;border-radius:11px;"></div>
<div style="position:absolute;left:1060.49px;top:1228.76px;font-size:29.65px;line-height:1;font-weight:400;color:#bdbdbd;letter-spacing:-0.382px;white-space:nowrap;-webkit-text-stroke:0.22px #bdbdbd;">processMinersFees</div>
<div style="position:absolute;left:1417px;top:1224.5px;width:124px;height:40.0px;background:#2c4f1f;border-radius:11px;"></div>
<div style="position:absolute;left:1424.15px;top:1228.76px;font-size:29.65px;line-height:1;font-weight:400;color:#e8f4d2;letter-spacing:-0.473px;white-space:nowrap;-webkit-text-stroke:0.22px #e8f4d2;">Success</div>
<div style="position:absolute;left:1715.28px;top:1228.76px;font-size:29.65px;line-height:1;font-weight:400;color:#8f7cf7;letter-spacing:-0.767px;white-space:nowrap;-webkit-text-stroke:0.22px #8f7cf7;">7479799</div>
<div style="position:absolute;left:1928.01px;top:1228.76px;font-size:29.65px;line-height:1;font-weight:400;color:#bcbcbc;letter-spacing:0.664px;white-space:nowrap;-webkit-text-stroke:0.22px #bcbcbc;">2026-03-23 20:26:18</div>
<div style="position:absolute;left:2256.84px;top:1228.76px;font-size:29.65px;line-height:1;font-weight:400;color:#8f7cf7;letter-spacing:1.628px;white-space:nowrap;-webkit-text-stroke:0.22px #8f7cf7;">0x00 <span style="letter-spacing:-2.30px">..</span>. 0000</div>
<svg style="position:absolute;left:2451.5px;top:1229.5px;" width="26.0" height="31.0" viewBox="0 0 26 31" fill="none"><path d="M1.5 22 V4 a2.5 2.5 0 0 1 2.5-2.5 H17" stroke="#bcbcbc" stroke-width="2.4" stroke-linecap="round"/><rect x="7" y="7" width="17.5" height="22.5" rx="2.5" stroke="#bcbcbc" stroke-width="2.6"/></svg>
<svg style="position:absolute;left:2550px;top:1235px;" width="33" height="18" viewBox="0 0 33 18" fill="none"><path d="M1.5 9 H30.5 M23 2 L30.5 9 L23 16" stroke="#bcbcbc" stroke-width="2.4" stroke-linecap="round" stroke-linejoin="round"/></svg>
<div style="position:absolute;left:2646.44px;top:1228.76px;font-size:29.65px;line-height:1;font-weight:400;color:#8f7cf7;letter-spacing:1.261px;white-space:nowrap;-webkit-text-stroke:0.22px #8f7cf7;">0x00 <span style="letter-spacing:-2.30px">..</span>. 0008</div>
<svg style="position:absolute;left:2837.1px;top:1229.5px;" width="26.0" height="31.0" viewBox="0 0 26 31" fill="none"><path d="M1.5 22 V4 a2.5 2.5 0 0 1 2.5-2.5 H17" stroke="#bcbcbc" stroke-width="2.4" stroke-linecap="round"/><rect x="7" y="7" width="17.5" height="22.5" rx="2.5" stroke="#bcbcbc" stroke-width="2.6"/></svg>
<div style="position:absolute;left:3042.04px;top:1228.76px;font-size:29.65px;line-height:1;font-weight:400;color:#bcbcbc;letter-spacing:0.000px;white-space:nowrap;-webkit-text-stroke:0.22px #bcbcbc;">0</div>
<div style="position:absolute;left:3334.44px;top:1228.76px;font-size:29.65px;line-height:1;font-weight:400;color:#bcbcbc;letter-spacing:0.000px;white-space:nowrap;-webkit-text-stroke:0.22px #bcbcbc;">0</div>
<div style="position:absolute;left:3627.44px;top:1228.76px;font-size:29.65px;line-height:1;font-weight:400;color:#bcbcbc;letter-spacing:0.000px;white-space:nowrap;-webkit-text-stroke:0.22px #bcbcbc;">0</div>
<div style="position:absolute;left:458px;top:1412px;width:3324px;height:2px;background:#383838;border-radius:0px;"></div>
<div style="position:absolute;left:503.84px;top:1340.76px;font-size:29.65px;line-height:1;font-weight:400;color:#8f7cf7;letter-spacing:-1.563px;white-space:nowrap;-webkit-text-stroke:0.22px #8f7cf7;">0x11 <span style="letter-spacing:-2.30px">..</span>. 9adb</div>
<svg style="position:absolute;left:666.3px;top:1341.5px;" width="26.0" height="31.0" viewBox="0 0 26 31" fill="none"><path d="M1.5 22 V4 a2.5 2.5 0 0 1 2.5-2.5 H17" stroke="#bcbcbc" stroke-width="2.4" stroke-linecap="round"/><rect x="7" y="7" width="17.5" height="22.5" rx="2.5" stroke="#bcbcbc" stroke-width="2.6"/></svg>
<div style="position:absolute;left:840px;top:1336.5px;width:111.70000000000005px;height:40.0px;background:#262626;border-radius:11px;"></div>
<div style="position:absolute;left:846.03px;top:1340.76px;font-size:29.65px;line-height:1;font-weight:400;color:#bdbdbd;letter-spacing:0.110px;white-space:nowrap;-webkit-text-stroke:0.22px #bdbdbd;">remasc</div>
<div style="position:absolute;left:1054px;top:1336.5px;width:266.70000000000005px;height:40.0px;background:#262626;border-radius:11px;"></div>
<div style="position:absolute;left:1060.49px;top:1340.76px;font-size:29.65px;line-height:1;font-weight:400;color:#bdbdbd;letter-spacing:-0.382px;white-space:nowrap;-webkit-text-stroke:0.22px #bdbdbd;">processMinersFees</div>
<div style="position:absolute;left:1417px;top:1336.5px;width:124px;height:40.0px;background:#2c4f1f;border-radius:11px;"></div>
<div style="position:absolute;left:1424.15px;top:1340.76px;font-size:29.65px;line-height:1;font-weight:400;color:#e8f4d2;letter-spacing:-0.473px;white-space:nowrap;-webkit-text-stroke:0.22px #e8f4d2;">Success</div>
<div style="position:absolute;left:1715.28px;top:1340.76px;font-size:29.65px;line-height:1;font-weight:400;color:#8f7cf7;letter-spacing:-0.787px;white-space:nowrap;-webkit-text-stroke:0.22px #8f7cf7;">7479798</div>
<div style="position:absolute;left:1928.01px;top:1340.76px;font-size:29.65px;line-height:1;font-weight:400;color:#bcbcbc;letter-spacing:0.662px;white-space:nowrap;-webkit-text-stroke:0.22px #bcbcbc;">2026-03-23 20:25:45</div>
<div style="position:absolute;left:2256.84px;top:1340.76px;font-size:29.65px;line-height:1;font-weight:400;color:#8f7cf7;letter-spacing:1.628px;white-space:nowrap;-webkit-text-stroke:0.22px #8f7cf7;">0x00 <span style="letter-spacing:-2.30px">..</span>. 0000</div>
<svg style="position:absolute;left:2451.5px;top:1341.5px;" width="26.0" height="31.0" viewBox="0 0 26 31" fill="none"><path d="M1.5 22 V4 a2.5 2.5 0 0 1 2.5-2.5 H17" stroke="#bcbcbc" stroke-width="2.4" stroke-linecap="round"/><rect x="7" y="7" width="17.5" height="22.5" rx="2.5" stroke="#bcbcbc" stroke-width="2.6"/></svg>
<svg style="position:absolute;left:2550px;top:1347px;" width="33" height="18" viewBox="0 0 33 18" fill="none"><path d="M1.5 9 H30.5 M23 2 L30.5 9 L23 16" stroke="#bcbcbc" stroke-width="2.4" stroke-linecap="round" stroke-linejoin="round"/></svg>
<div style="position:absolute;left:2646.44px;top:1340.76px;font-size:29.65px;line-height:1;font-weight:400;color:#8f7cf7;letter-spacing:1.261px;white-space:nowrap;-webkit-text-stroke:0.22px #8f7cf7;">0x00 <span style="letter-spacing:-2.30px">..</span>. 0008</div>
<svg style="position:absolute;left:2837.1px;top:1341.5px;" width="26.0" height="31.0" viewBox="0 0 26 31" fill="none"><path d="M1.5 22 V4 a2.5 2.5 0 0 1 2.5-2.5 H17" stroke="#bcbcbc" stroke-width="2.4" stroke-linecap="round"/><rect x="7" y="7" width="17.5" height="22.5" rx="2.5" stroke="#bcbcbc" stroke-width="2.6"/></svg>
<div style="position:absolute;left:3042.04px;top:1340.76px;font-size:29.65px;line-height:1;font-weight:400;color:#bcbcbc;letter-spacing:0.000px;white-space:nowrap;-webkit-text-stroke:0.22px #bcbcbc;">0</div>
<div style="position:absolute;left:3334.44px;top:1340.76px;font-size:29.65px;line-height:1;font-weight:400;color:#bcbcbc;letter-spacing:0.000px;white-space:nowrap;-webkit-text-stroke:0.22px #bcbcbc;">0</div>
<div style="position:absolute;left:3627.44px;top:1340.76px;font-size:29.65px;line-height:1;font-weight:400;color:#bcbcbc;letter-spacing:0.000px;white-space:nowrap;-webkit-text-stroke:0.22px #bcbcbc;">0</div>
<div style="position:absolute;left:458px;top:1524px;width:3324px;height:2px;background:#383838;border-radius:0px;"></div>
<div style="position:absolute;left:497.54px;top:1452.76px;font-size:29.65px;line-height:1;font-weight:400;color:#8f7cf7;letter-spacing:-0.438px;white-space:nowrap;-webkit-text-stroke:0.22px #8f7cf7;">0xba <span style="letter-spacing:-2.30px">..</span>. 4baa</div>
<svg style="position:absolute;left:672.5px;top:1453.5px;" width="26.0" height="31.0" viewBox="0 0 26 31" fill="none"><path d="M1.5 22 V4 a2.5 2.5 0 0 1 2.5-2.5 H17" stroke="#bcbcbc" stroke-width="2.4" stroke-linecap="round"/><rect x="7" y="7" width="17.5" height="22.5" rx="2.5" stroke="#bcbcbc" stroke-width="2.6"/></svg>
<div style="position:absolute;left:843px;top:1448.5px;width:104.79999999999995px;height:40.0px;background:#262626;border-radius:11px;"></div>
<div style="position:absolute;left:849.03px;top:1452.76px;font-size:29.65px;line-height:1;font-weight:400;color:#bdbdbd;letter-spacing:0.385px;white-space:nowrap;-webkit-text-stroke:0.22px #bdbdbd;">normal</div>
<div style="position:absolute;left:1417px;top:1448.5px;width:124px;height:40.0px;background:#2c4f1f;border-radius:11px;"></div>
<div style="position:absolute;left:1424.15px;top:1452.76px;font-size:29.65px;line-height:1;font-weight:400;color:#e8f4d2;letter-spacing:-0.473px;white-space:nowrap;-webkit-text-stroke:0.22px #e8f4d2;">Success</div>
<div style="position:absolute;left:1715.28px;top:1452.76px;font-size:29.65px;line-height:1;font-weight:400;color:#8f7cf7;letter-spacing:-0.787px;white-space:nowrap;-webkit-text-stroke:0.22px #8f7cf7;">7479798</div>
<div style="position:absolute;left:1928.01px;top:1452.76px;font-size:29.65px;line-height:1;font-weight:400;color:#bcbcbc;letter-spacing:0.662px;white-space:nowrap;-webkit-text-stroke:0.22px #bcbcbc;">2026-03-23 20:25:45</div>
<div style="position:absolute;left:2265.34px;top:1452.76px;font-size:29.65px;line-height:1;font-weight:400;color:#8f7cf7;letter-spacing:-0.069px;white-space:nowrap;-webkit-text-stroke:0.22px #8f7cf7;">0xd0 <span style="letter-spacing:-2.30px">..</span>. 9877</div>
<svg style="position:absolute;left:2442.7px;top:1453.5px;" width="26.0" height="31.0" viewBox="0 0 26 31" fill="none"><path d="M1.5 22 V4 a2.5 2.5 0 0 1 2.5-2.5 H17" stroke="#bcbcbc" stroke-width="2.4" stroke-linecap="round"/><rect x="7" y="7" width="17.5" height="22.5" rx="2.5" stroke="#bcbcbc" stroke-width="2.6"/></svg>
<svg style="position:absolute;left:2550px;top:1459px;" width="33" height="18" viewBox="0 0 33 18" fill="none"><path d="M1.5 9 H30.5 M23 2 L30.5 9 L23 16" stroke="#bcbcbc" stroke-width="2.4" stroke-linecap="round" stroke-linejoin="round"/></svg>
<div style="position:absolute;left:2657.34px;top:1452.76px;font-size:29.65px;line-height:1;font-weight:400;color:#8f7cf7;letter-spacing:-0.719px;white-space:nowrap;-webkit-text-stroke:0.22px #8f7cf7;">0xFf <span style="letter-spacing:-2.30px">..</span>. 6BcB</div>
<svg style="position:absolute;left:2826.2px;top:1453.5px;" width="26.0" height="31.0" viewBox="0 0 26 31" fill="none"><path d="M1.5 22 V4 a2.5 2.5 0 0 1 2.5-2.5 H17" stroke="#bcbcbc" stroke-width="2.4" stroke-linecap="round"/><rect x="7" y="7" width="17.5" height="22.5" rx="2.5" stroke="#bcbcbc" stroke-width="2.6"/></svg>
<div style="position:absolute;left:3042.04px;top:1452.76px;font-size:29.65px;line-height:1;font-weight:400;color:#bcbcbc;letter-spacing:0.000px;white-space:nowrap;-webkit-text-stroke:0.22px #bcbcbc;">0</div>
<div style="position:absolute;left:3267.04px;top:1452.76px;font-size:29.65px;line-height:1;font-weight:400;color:#bcbcbc;letter-spacing:-0.160px;white-space:nowrap;-webkit-text-stroke:0.22px #bcbcbc;">0.00037691</div>
<div style="position:absolute;left:3574.14px;top:1452.76px;font-size:29.65px;line-height:1;font-weight:400;color:#bcbcbc;letter-spacing:-1.280px;white-space:nowrap;-webkit-text-stroke:0.22px #bcbcbc;">1,932,896</div>
<div style="position:absolute;left:458px;top:1636px;width:3324px;height:2px;background:#383838;border-radius:0px;"></div>
<div style="position:absolute;left:499.84px;top:1564.76px;font-size:29.65px;line-height:1;font-weight:400;color:#8f7cf7;letter-spacing:0.044px;white-space:nowrap;-webkit-text-stroke:0.22px #8f7cf7;">0x34 <span style="letter-spacing:-2.30px">..</span>. 48f4</div>
<svg style="position:absolute;left:670.5px;top:1565.5px;" width="26.0" height="31.0" viewBox="0 0 26 31" fill="none"><path d="M1.5 22 V4 a2.5 2.5 0 0 1 2.5-2.5 H17" stroke="#bcbcbc" stroke-width="2.4" stroke-linecap="round"/><rect x="7" y="7" width="17.5" height="22.5" rx="2.5" stroke="#bcbcbc" stroke-width="2.6"/></svg>
<div style="position:absolute;left:840px;top:1560.5px;width:111.70000000000005px;height:40.0px;background:#262626;border-radius:11px;"></div>
<div style="position:absolute;left:846.03px;top:1564.76px;font-size:29.65px;line-height:1;font-weight:400;color:#bdbdbd;letter-spacing:0.110px;white-space:nowrap;-webkit-text-stroke:0.22px #bdbdbd;">remasc</div>
<div style="position:absolute;left:1054px;top:1560.5px;width:266.70000000000005px;height:40.0px;background:#262626;border-radius:11px;"></div>
<div style="position:absolute;left:1060.49px;top:1564.76px;font-size:29.65px;line-height:1;font-weight:400;color:#bdbdbd;letter-spacing:-0.382px;white-space:nowrap;-webkit-text-stroke:0.22px #bdbdbd;">processMinersFees</div>
<div style="position:absolute;left:1417px;top:1560.5px;width:124px;height:40.0px;background:#2c4f1f;border-radius:11px;"></div>
<div style="position:absolute;left:1424.15px;top:1564.76px;font-size:29.65px;line-height:1;font-weight:400;color:#e8f4d2;letter-spacing:-0.473px;white-space:nowrap;-webkit-text-stroke:0.22px #e8f4d2;">Success</div>
<div style="position:absolute;left:1715.28px;top:1564.76px;font-size:29.65px;line-height:1;font-weight:400;color:#8f7cf7;letter-spacing:-0.753px;white-space:nowrap;-webkit-text-stroke:0.22px #8f7cf7;">7479797</div>
<div style="position:absolute;left:1928.01px;top:1564.76px;font-size:29.65px;line-height:1;font-weight:400;color:#bcbcbc;letter-spacing:0.664px;white-space:nowrap;-webkit-text-stroke:0.22px #bcbcbc;">2026-03-23 20:24:48</div>
<div style="position:absolute;left:2256.84px;top:1564.76px;font-size:29.65px;line-height:1;font-weight:400;color:#8f7cf7;letter-spacing:1.628px;white-space:nowrap;-webkit-text-stroke:0.22px #8f7cf7;">0x00 <span style="letter-spacing:-2.30px">..</span>. 0000</div>
<svg style="position:absolute;left:2451.5px;top:1565.5px;" width="26.0" height="31.0" viewBox="0 0 26 31" fill="none"><path d="M1.5 22 V4 a2.5 2.5 0 0 1 2.5-2.5 H17" stroke="#bcbcbc" stroke-width="2.4" stroke-linecap="round"/><rect x="7" y="7" width="17.5" height="22.5" rx="2.5" stroke="#bcbcbc" stroke-width="2.6"/></svg>
<svg style="position:absolute;left:2550px;top:1571px;" width="33" height="18" viewBox="0 0 33 18" fill="none"><path d="M1.5 9 H30.5 M23 2 L30.5 9 L23 16" stroke="#bcbcbc" stroke-width="2.4" stroke-linecap="round" stroke-linejoin="round"/></svg>
<div style="position:absolute;left:2646.44px;top:1564.76px;font-size:29.65px;line-height:1;font-weight:400;color:#8f7cf7;letter-spacing:1.261px;white-space:nowrap;-webkit-text-stroke:0.22px #8f7cf7;">0x00 <span style="letter-spacing:-2.30px">..</span>. 0008</div>
<svg style="position:absolute;left:2837.1px;top:1565.5px;" width="26.0" height="31.0" viewBox="0 0 26 31" fill="none"><path d="M1.5 22 V4 a2.5 2.5 0 0 1 2.5-2.5 H17" stroke="#bcbcbc" stroke-width="2.4" stroke-linecap="round"/><rect x="7" y="7" width="17.5" height="22.5" rx="2.5" stroke="#bcbcbc" stroke-width="2.6"/></svg>
<div style="position:absolute;left:3042.04px;top:1564.76px;font-size:29.65px;line-height:1;font-weight:400;color:#bcbcbc;letter-spacing:0.000px;white-space:nowrap;-webkit-text-stroke:0.22px #bcbcbc;">0</div>
<div style="position:absolute;left:3334.44px;top:1564.76px;font-size:29.65px;line-height:1;font-weight:400;color:#bcbcbc;letter-spacing:0.000px;white-space:nowrap;-webkit-text-stroke:0.22px #bcbcbc;">0</div>
<div style="position:absolute;left:3627.44px;top:1564.76px;font-size:29.65px;line-height:1;font-weight:400;color:#bcbcbc;letter-spacing:0.000px;white-space:nowrap;-webkit-text-stroke:0.22px #bcbcbc;">0</div>
<div style="position:absolute;left:458px;top:1748px;width:3324px;height:2px;background:#383838;border-radius:0px;"></div>
<div style="position:absolute;left:496.54px;top:1676.76px;font-size:29.65px;line-height:1;font-weight:400;color:#8f7cf7;letter-spacing:0.078px;white-space:nowrap;-webkit-text-stroke:0.22px #8f7cf7;">0xcd <span style="letter-spacing:-2.30px">..</span>. d447</div>
<svg style="position:absolute;left:673.5px;top:1677.5px;" width="26.0" height="31.0" viewBox="0 0 26 31" fill="none"><path d="M1.5 22 V4 a2.5 2.5 0 0 1 2.5-2.5 H17" stroke="#bcbcbc" stroke-width="2.4" stroke-linecap="round"/><rect x="7" y="7" width="17.5" height="22.5" rx="2.5" stroke="#bcbcbc" stroke-width="2.6"/></svg>
<div style="position:absolute;left:807px;top:1672.5px;width:177.5px;height:40.0px;background:#262626;border-radius:11px;"></div>
<div style="position:absolute;left:813.74px;top:1676.76px;font-size:29.65px;line-height:1;font-weight:400;color:#bdbdbd;letter-spacing:0.546px;white-space:nowrap;-webkit-text-stroke:0.22px #bdbdbd;">contract call</div>
<div style="position:absolute;left:1094px;top:1672.5px;width:186.5px;height:40.0px;background:#262626;border-radius:11px;"></div>
<div style="position:absolute;left:1100.84px;top:1676.76px;font-size:29.65px;line-height:1;font-weight:400;color:#bdbdbd;letter-spacing:1.092px;white-space:nowrap;-webkit-text-stroke:0.22px #bdbdbd;">0x5a686699</div>
<div style="position:absolute;left:1417px;top:1672.5px;width:124px;height:40.0px;background:#2c4f1f;border-radius:11px;"></div>
<div style="position:absolute;left:1424.15px;top:1676.76px;font-size:29.65px;line-height:1;font-weight:400;color:#e8f4d2;letter-spacing:-0.473px;white-space:nowrap;-webkit-text-stroke:0.22px #e8f4d2;">Success</div>
<div style="position:absolute;left:1715.28px;top:1676.76px;font-size:29.65px;line-height:1;font-weight:400;color:#8f7cf7;letter-spacing:-0.753px;white-space:nowrap;-webkit-text-stroke:0.22px #8f7cf7;">7479797</div>
<div style="position:absolute;left:1928.01px;top:1676.76px;font-size:29.65px;line-height:1;font-weight:400;color:#bcbcbc;letter-spacing:0.664px;white-space:nowrap;-webkit-text-stroke:0.22px #bcbcbc;">2026-03-23 20:24:48</div>
<div style="position:absolute;left:2265.44px;top:1676.76px;font-size:29.65px;line-height:1;font-weight:400;color:#8f7cf7;letter-spacing:-0.959px;white-space:nowrap;-webkit-text-stroke:0.22px #8f7cf7;">0xC6 <span style="letter-spacing:-2.30px">..</span>. 74Ba</div>
<svg style="position:absolute;left:2443.6px;top:1677.5px;" width="26.0" height="31.0" viewBox="0 0 26 31" fill="none"><path d="M1.5 22 V4 a2.5 2.5 0 0 1 2.5-2.5 H17" stroke="#bcbcbc" stroke-width="2.4" stroke-linecap="round"/><rect x="7" y="7" width="17.5" height="22.5" rx="2.5" stroke="#bcbcbc" stroke-width="2.6"/></svg>
<svg style="position:absolute;left:2550px;top:1683px;" width="33" height="18" viewBox="0 0 33 18" fill="none"><path d="M1.5 9 H30.5 M23 2 L30.5 9 L23 16" stroke="#bcbcbc" stroke-width="2.4" stroke-linecap="round" stroke-linejoin="round"/></svg>
<div style="position:absolute;left:2657.14px;top:1676.76px;font-size:29.65px;line-height:1;font-weight:400;color:#8f7cf7;letter-spacing:-0.092px;white-space:nowrap;-webkit-text-stroke:0.22px #8f7cf7;">0x46 <span style="letter-spacing:-2.30px">..</span>. f48a</div>
<svg style="position:absolute;left:2827.3px;top:1677.5px;" width="26.0" height="31.0" viewBox="0 0 26 31" fill="none"><path d="M1.5 22 V4 a2.5 2.5 0 0 1 2.5-2.5 H17" stroke="#bcbcbc" stroke-width="2.4" stroke-linecap="round"/><rect x="7" y="7" width="17.5" height="22.5" rx="2.5" stroke="#bcbcbc" stroke-width="2.6"/></svg>
<div style="position:absolute;left:3042.04px;top:1676.76px;font-size:29.65px;line-height:1;font-weight:400;color:#bcbcbc;letter-spacing:0.000px;white-space:nowrap;-webkit-text-stroke:0.22px #bcbcbc;">0</div>
<div style="position:absolute;left:3257.34px;top:1676.76px;font-size:29.65px;line-height:1;font-weight:400;color:#bcbcbc;letter-spacing:1.831px;white-space:nowrap;-webkit-text-stroke:0.22px #bcbcbc;">0.00000044</div>
<div style="position:absolute;left:3589.81px;top:1676.76px;font-size:29.65px;line-height:1;font-weight:400;color:#bcbcbc;letter-spacing:0.341px;white-space:nowrap;-webkit-text-stroke:0.22px #bcbcbc;">59,969</div>
<div style="position:absolute;left:458px;top:1860px;width:3324px;height:2px;background:#383838;border-radius:0px;"></div>
<div style="position:absolute;left:497.54px;top:1788.76px;font-size:29.65px;line-height:1;font-weight:400;color:#8f7cf7;letter-spacing:-0.297px;white-space:nowrap;-webkit-text-stroke:0.22px #8f7cf7;">0xa7 <span style="letter-spacing:-2.30px">..</span>. 28d9</div>
<svg style="position:absolute;left:672.5px;top:1789.5px;" width="26.0" height="31.0" viewBox="0 0 26 31" fill="none"><path d="M1.5 22 V4 a2.5 2.5 0 0 1 2.5-2.5 H17" stroke="#bcbcbc" stroke-width="2.4" stroke-linecap="round"/><rect x="7" y="7" width="17.5" height="22.5" rx="2.5" stroke="#bcbcbc" stroke-width="2.6"/></svg>
<div style="position:absolute;left:843px;top:1784.5px;width:104.79999999999995px;height:40.0px;background:#262626;border-radius:11px;"></div>
<div style="position:absolute;left:849.03px;top:1788.76px;font-size:29.65px;line-height:1;font-weight:400;color:#bdbdbd;letter-spacing:0.385px;white-space:nowrap;-webkit-text-stroke:0.22px #bdbdbd;">normal</div>
<div style="position:absolute;left:1417px;top:1784.5px;width:124px;height:40.0px;background:#2c4f1f;border-radius:11px;"></div>
<div style="position:absolute;left:1424.15px;top:1788.76px;font-size:29.65px;line-height:1;font-weight:400;color:#e8f4d2;letter-spacing:-0.473px;white-space:nowrap;-webkit-text-stroke:0.22px #e8f4d2;">Success</div>
<div style="position:absolute;left:1715.28px;top:1788.76px;font-size:29.65px;line-height:1;font-weight:400;color:#8f7cf7;letter-spacing:-0.753px;white-space:nowrap;-webkit-text-stroke:0.22px #8f7cf7;">7479797</div>
<div style="position:absolute;left:1928.01px;top:1788.76px;font-size:29.65px;line-height:1;font-weight:400;color:#bcbcbc;letter-spacing:0.664px;white-space:nowrap;-webkit-text-stroke:0.22px #bcbcbc;">2026-03-23 20:24:48</div>
<div style="position:absolute;left:2265.34px;top:1788.76px;font-size:29.65px;line-height:1;font-weight:400;color:#8f7cf7;letter-spacing:-0.069px;white-space:nowrap;-webkit-text-stroke:0.22px #8f7cf7;">0xd0 <span style="letter-spacing:-2.30px">..</span>. 9877</div>
<svg style="position:absolute;left:2442.7px;top:1789.5px;" width="26.0" height="31.0" viewBox="0 0 26 31" fill="none"><path d="M1.5 22 V4 a2.5 2.5 0 0 1 2.5-2.5 H17" stroke="#bcbcbc" stroke-width="2.4" stroke-linecap="round"/><rect x="7" y="7" width="17.5" height="22.5" rx="2.5" stroke="#bcbcbc" stroke-width="2.6"/></svg>
<svg style="position:absolute;left:2550px;top:1795px;" width="33" height="18" viewBox="0 0 33 18" fill="none"><path d="M1.5 9 H30.5 M23 2 L30.5 9 L23 16" stroke="#bcbcbc" stroke-width="2.4" stroke-linecap="round" stroke-linejoin="round"/></svg>
<div style="position:absolute;left:2657.34px;top:1788.76px;font-size:29.65px;line-height:1;font-weight:400;color:#8f7cf7;letter-spacing:-0.719px;white-space:nowrap;-webkit-text-stroke:0.22px #8f7cf7;">0xFf <span style="letter-spacing:-2.30px">..</span>. 6BcB</div>
<svg style="position:absolute;left:2826.2px;top:1789.5px;" width="26.0" height="31.0" viewBox="0 0 26 31" fill="none"><path d="M1.5 22 V4 a2.5 2.5 0 0 1 2.5-2.5 H17" stroke="#bcbcbc" stroke-width="2.4" stroke-linecap="round"/><rect x="7" y="7" width="17.5" height="22.5" rx="2.5" stroke="#bcbcbc" stroke-width="2.6"/></svg>
<div style="position:absolute;left:3042.04px;top:1788.76px;font-size:29.65px;line-height:1;font-weight:400;color:#bcbcbc;letter-spacing:0.000px;white-space:nowrap;-webkit-text-stroke:0.22px #bcbcbc;">0</div>
<div style="position:absolute;left:3262.24px;top:1788.76px;font-size:29.65px;line-height:1;font-weight:400;color:#bcbcbc;letter-spacing:0.790px;white-space:nowrap;-webkit-text-stroke:0.22px #bcbcbc;">0.00037686</div>
<div style="position:absolute;left:3574.54px;top:1788.76px;font-size:29.65px;line-height:1;font-weight:400;color:#bcbcbc;letter-spacing:-1.307px;white-space:nowrap;-webkit-text-stroke:0.22px #bcbcbc;">1,932,592</div>
<div style="position:absolute;left:502.44px;top:1900.76px;font-size:29.65px;line-height:1;font-weight:400;color:#8f7cf7;letter-spacing:-0.458px;white-space:nowrap;-webkit-text-stroke:0.22px #8f7cf7;">0x0d <span style="letter-spacing:-2.30px">..</span>. fe91</div>
<svg style="position:absolute;left:667.5px;top:1901.5px;" width="26.0" height="31.0" viewBox="0 0 26 31" fill="none"><path d="M1.5 22 V4 a2.5 2.5 0 0 1 2.5-2.5 H17" stroke="#bcbcbc" stroke-width="2.4" stroke-linecap="round"/><rect x="7" y="7" width="17.5" height="22.5" rx="2.5" stroke="#bcbcbc" stroke-width="2.6"/></svg>
<div style="position:absolute;left:840px;top:1896.5px;width:111.70000000000005px;height:40.0px;background:#262626;border-radius:11px;"></div>
<div style="position:absolute;left:846.03px;top:1900.76px;font-size:29.65px;line-height:1;font-weight:400;color:#bdbdbd;letter-spacing:0.110px;white-space:nowrap;-webkit-text-stroke:0.22px #bdbdbd;">remasc</div>
<div style="position:absolute;left:1054px;top:1896.5px;width:266.70000000000005px;height:40.0px;background:#262626;border-radius:11px;"></div>
<div style="position:absolute;left:1060.49px;top:1900.76px;font-size:29.65px;line-height:1;font-weight:400;color:#bdbdbd;letter-spacing:-0.382px;white-space:nowrap;-webkit-text-stroke:0.22px #bdbdbd;">processMinersFees</div>
<div style="position:absolute;left:1417px;top:1896.5px;width:124px;height:40.0px;background:#2c4f1f;border-radius:11px;"></div>
<div style="position:absolute;left:1424.15px;top:1900.76px;font-size:29.65px;line-height:1;font-weight:400;color:#e8f4d2;letter-spacing:-0.473px;white-space:nowrap;-webkit-text-stroke:0.22px #e8f4d2;">Success</div>
<div style="position:absolute;left:1715.28px;top:1900.76px;font-size:29.65px;line-height:1;font-weight:400;color:#8f7cf7;letter-spacing:-0.784px;white-space:nowrap;-webkit-text-stroke:0.22px #8f7cf7;">7479796</div>
<div style="position:absolute;left:1928.01px;top:1900.76px;font-size:29.65px;line-height:1;font-weight:400;color:#bcbcbc;letter-spacing:0.664px;white-space:nowrap;-webkit-text-stroke:0.22px #bcbcbc;">2026-03-23 20:24:18</div>
<div style="position:absolute;left:2256.84px;top:1900.76px;font-size:29.65px;line-height:1;font-weight:400;color:#8f7cf7;letter-spacing:1.628px;white-space:nowrap;-webkit-text-stroke:0.22px #8f7cf7;">0x00 <span style="letter-spacing:-2.30px">..</span>. 0000</div>
<svg style="position:absolute;left:2451.5px;top:1901.5px;" width="26.0" height="31.0" viewBox="0 0 26 31" fill="none"><path d="M1.5 22 V4 a2.5 2.5 0 0 1 2.5-2.5 H17" stroke="#bcbcbc" stroke-width="2.4" stroke-linecap="round"/><rect x="7" y="7" width="17.5" height="22.5" rx="2.5" stroke="#bcbcbc" stroke-width="2.6"/></svg>
<svg style="position:absolute;left:2550px;top:1907px;" width="33" height="18" viewBox="0 0 33 18" fill="none"><path d="M1.5 9 H30.5 M23 2 L30.5 9 L23 16" stroke="#bcbcbc" stroke-width="2.4" stroke-linecap="round" stroke-linejoin="round"/></svg>
<div style="position:absolute;left:2646.44px;top:1900.76px;font-size:29.65px;line-height:1;font-weight:400;color:#8f7cf7;letter-spacing:1.261px;white-space:nowrap;-webkit-text-stroke:0.22px #8f7cf7;">0x00 <span style="letter-spacing:-2.30px">..</span>. 0008</div>
<svg style="position:absolute;left:2837.1px;top:1901.5px;" width="26.0" height="31.0" viewBox="0 0 26 31" fill="none"><path d="M1.5 22 V4 a2.5 2.5 0 0 1 2.5-2.5 H17" stroke="#bcbcbc" stroke-width="2.4" stroke-linecap="round"/><rect x="7" y="7" width="17.5" height="22.5" rx="2.5" stroke="#bcbcbc" stroke-width="2.6"/></svg>
<div style="position:absolute;left:3042.04px;top:1900.76px;font-size:29.65px;line-height:1;font-weight:400;color:#bcbcbc;letter-spacing:0.000px;white-space:nowrap;-webkit-text-stroke:0.22px #bcbcbc;">0</div>
<div style="position:absolute;left:3334.44px;top:1900.76px;font-size:29.65px;line-height:1;font-weight:400;color:#bcbcbc;letter-spacing:0.000px;white-space:nowrap;-webkit-text-stroke:0.22px #bcbcbc;">0</div>
<div style="position:absolute;left:3627.44px;top:1900.76px;font-size:29.65px;line-height:1;font-weight:400;color:#bcbcbc;letter-spacing:0.000px;white-space:nowrap;-webkit-text-stroke:0.22px #bcbcbc;">0</div>
<div style="position:absolute;left:1722px;top:723px;width:800px;height:579px;background:#242424;border-radius:14px;border:2px solid #3a3a3a;box-sizing:border-box;"></div>
<div style="position:absolute;left:1754.02px;top:745.78px;font-size:30.23px;line-height:1;font-weight:400;color:#bdbdbd;letter-spacing:-0.633px;white-space:nowrap;-webkit-text-stroke:0.22px #bdbdbd;">Blocks</div>
<div style="position:absolute;left:1755.11px;top:809.74px;font-size:30.52px;line-height:1;font-weight:400;color:#6e6e6e;letter-spacing:-0.405px;white-space:nowrap;-webkit-text-stroke:0.23px #6e6e6e;">Specific blocks</div>
<div style="position:absolute;left:1756px;top:870px;width:732px;height:70px;background:#1e1e1e;border-radius:14px;border:2px solid #2f2f2f;box-sizing:border-box;"></div>
<div style="position:absolute;left:1772.77px;top:891.94px;font-size:29.07px;line-height:1;font-weight:400;color:#5a5a5a;letter-spacing:0.036px;white-space:nowrap;-webkit-text-stroke:0.22px #5a5a5a;">e.g. 100,200,300</div>
<div style="position:absolute;left:2107.76px;top:977.50px;font-size:29.6px;line-height:1;font-weight:400;color:#bdbdbd;letter-spacing:1.415px;white-space:nowrap;-webkit-text-stroke:0.22px #bdbdbd;">or</div>
<div style="position:absolute;left:1753.94px;top:1041.14px;font-size:31.25px;line-height:1;font-weight:400;color:#cfcfcf;letter-spacing:-1.350px;white-space:nowrap;-webkit-text-stroke:0.23px #cfcfcf;">Range blocks</div>
<div style="position:absolute;left:1756px;top:1093px;width:350px;height:72px;background:#151515;border-radius:14px;border:2px solid #3a3a3a;box-sizing:border-box;"></div>
<div style="position:absolute;left:1772.48px;top:1113.76px;font-size:30.5px;line-height:1;font-weight:400;color:#fff;letter-spacing:-1.087px;white-space:nowrap;-webkit-text-stroke:0.31px #fff;">100</div>
<div style="position:absolute;left:2138px;top:1093px;width:350px;height:72px;background:#151515;border-radius:14px;border:2px solid #3a3a3a;box-sizing:border-box;"></div>
<div style="position:absolute;left:2155.24px;top:1113.34px;font-size:31px;line-height:1;font-weight:400;color:#fff;letter-spacing:1.624px;white-space:nowrap;-webkit-text-stroke:0.31px #fff;">200</div>
<div style="position:absolute;left:2210px;top:1111px;width:2px;height:37px;background:#fff;border-radius:0px;"></div>
<div style="position:absolute;left:1754.66px;top:1226.62px;font-size:28.49px;line-height:1;font-weight:400;color:#8f7cf7;letter-spacing:-0.320px;white-space:nowrap;-webkit-text-stroke:0.21px #8f7cf7;">Reset</div>
<div style="position:absolute;left:2380px;top:1213px;width:108px;height:56px;background:#8d78f6;border-radius:16px;"></div>
<div style="position:absolute;left:2397.44px;top:1226.62px;font-size:28.49px;line-height:1;font-weight:400;color:#0a0a0a;letter-spacing:0.686px;white-space:nowrap;-webkit-text-stroke:0.29px #0a0a0a;">Apply</div>
<div style="position:absolute;left:3746px;top:820px;width:84px;height:272px;background:#f2952e;border-radius:14px;"></div>
<div style="position:absolute;left:3783.5px;top:929.8px;width:0;height:0"><div style="position:absolute;left:0;top:0;transform:translate(-50%,-50%) rotate(-90deg);font-size:32px;line-height:1;color:#0a0a0a;white-space:nowrap;letter-spacing:0px">Feedback</div></div>
<svg style="position:absolute;left:3768px;top:1022px;" width="32" height="30" viewBox="0 0 32 30" fill="none"><path d="M0 1 L8 3 H27 a4 4 0 0 1 4 4 V25 a4 4 0 0 1-4 4 H9 a4 4 0 0 1-4-4 V7 Z" fill="#0a0a0a"/><circle cx="12" cy="12" r="1.8" fill="#f2952e"/><circle cx="24" cy="12" r="1.8" fill="#f2952e"/><path d="M11 18 Q18 24 25 18" stroke="#f2952e" stroke-width="2.2" stroke-linecap="round"/></svg>
<div style="position:absolute;left:0;top:0;width:3816px;height:1920px;pointer-events:none;overflow:hidden"><div style="position:absolute;left:-60px;top:-100px;width:3956px;height:2080px;box-sizing:border-box;border:60px solid #1e2517;border-top-color:transparent;border-radius:0 0 94px 94px"></div><div style="position:absolute;left:-1px;top:1850px;width:3837px;height:70px;box-sizing:border-box;border:2px solid #3d3d3d;border-top:0;border-radius:0 0 34px 34px"></div></div>
</div>
</body></html>
